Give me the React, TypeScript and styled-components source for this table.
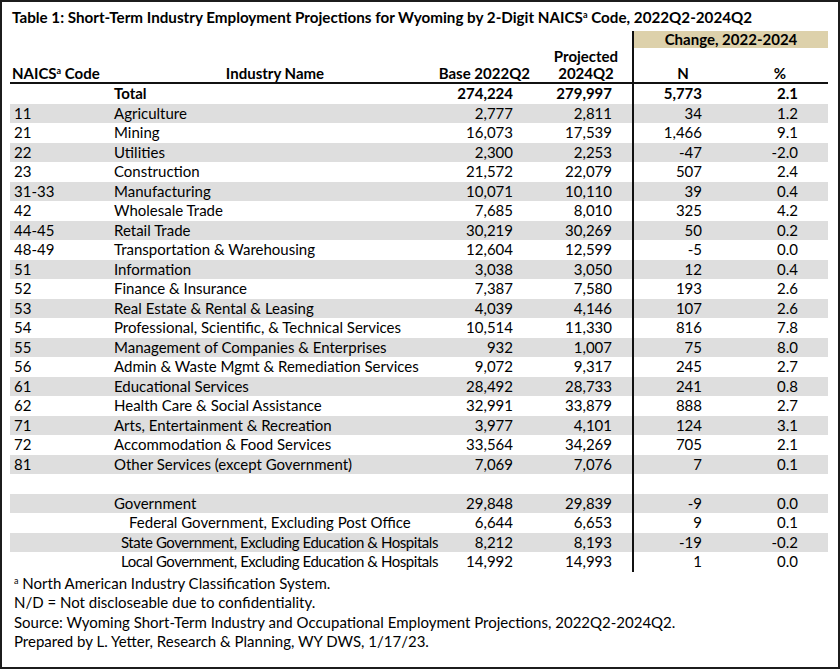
import React from "react";
import styled, { createGlobalStyle } from "styled-components";

const GlobalStyle = createGlobalStyle`
  html, body { margin: 0; padding: 0; background: #ffffff; }
  body { font-family: Lato, "Open Sans", sans-serif; color: #000; }
`;

const COLS = "100px 330px 90px 102px 108px 88px";
const ROW_H = 19.5;

const Frame = styled.div`
  width: 840px;
  height: 669px;
  box-sizing: border-box;
  border: 2px solid #1c1c1c;
  padding: 6px 0 0 8px;
  font-family: Lato, "Open Sans", sans-serif;
  font-size: 15px;
`;

const Title = styled.div`
  font-weight: 700;
  font-size: 15.2px;
  line-height: 19px;
  padding-left: 2px;
  height: 23px;
  white-space: nowrap;
`;

const Table = styled.div`
  display: flex;
  flex-direction: column;
  width: 818px;
`;

const HeadRow = styled.div<{ $h: number; $rule?: boolean }>`
  display: grid;
  grid-template-columns: ${COLS};
  height: ${(p) => p.$h}px;
  border-bottom: ${(p) => (p.$rule ? "2px solid #111" : "none")};
`;

const HeadCell = styled.div<{ $align?: string; $pl?: number; $pr?: number; $divider?: boolean }>`
  font-weight: 700;
  line-height: 17px;
  white-space: nowrap;
  text-align: ${(p) => p.$align || "left"};
  padding-left: ${(p) => p.$pl ?? 0}px;
  padding-right: ${(p) => p.$pr ?? 0}px;
  border-left: ${(p) => (p.$divider ? "2px solid #111" : "none")};
  display: flex;
  align-items: flex-end;
  justify-content: ${(p) =>
    p.$align === "right" ? "flex-end" : p.$align === "center" ? "center" : "flex-start"};
`;

const Band = styled.div`
  grid-column: 5 / 7;
  border-left: 2px solid #111;
  display: flex;
`;

const BandFill = styled.div`
  flex: 1;
  background: #ddd1ab;
  font-weight: 700;
  text-align: center;
  line-height: 17px;
`;

const Row = styled.div<{ $shade: boolean; $bold?: boolean }>`
  display: grid;
  grid-template-columns: ${COLS};
  height: ${ROW_H}px;
  background: ${(p) => (p.$shade ? "#dedede" : "transparent")};
  font-weight: ${(p) => (p.$bold ? 700 : 400)};
  line-height: ${ROW_H}px;
  white-space: nowrap;
`;

const Code = styled.div`
  padding-left: 4px;
`;

const Name = styled.div<{ $indent: number; $tight?: boolean }>`
  padding-left: ${(p) => 4 + p.$indent}px;
  letter-spacing: ${(p) => (p.$tight ? "-0.45px" : "normal")};
`;

const Num = styled.div<{ $pr: number; $divider?: boolean }>`
  text-align: right;
  padding-right: ${(p) => p.$pr}px;
  border-left: ${(p) => (p.$divider ? "2px solid #111" : "none")};
`;

const Notes = styled.div`
  padding: 2px 0 0 4px;
  line-height: 19.5px;
  font-size: 15px;
`;

const Sup = styled.span`
  font-size: 0.6em;
  vertical-align: 0.55em;
  line-height: 0;
`;

type R = { code: string; name: string; base: string; proj: string; n: string; pct: string; indent?: number; bold?: boolean; tight?: boolean };

const rows: R[] = [
  { code: "", name: "Total", base: "274,224", proj: "279,997", n: "5,773", pct: "2.1", bold: true },
  { code: "11", name: "Agriculture", base: "2,777", proj: "2,811", n: "34", pct: "1.2" },
  { code: "21", name: "Mining", base: "16,073", proj: "17,539", n: "1,466", pct: "9.1" },
  { code: "22", name: "Utilities", base: "2,300", proj: "2,253", n: "-47", pct: "-2.0" },
  { code: "23", name: "Construction", base: "21,572", proj: "22,079", n: "507", pct: "2.4" },
  { code: "31-33", name: "Manufacturing", base: "10,071", proj: "10,110", n: "39", pct: "0.4" },
  { code: "42", name: "Wholesale Trade", base: "7,685", proj: "8,010", n: "325", pct: "4.2" },
  { code: "44-45", name: "Retail Trade", base: "30,219", proj: "30,269", n: "50", pct: "0.2" },
  { code: "48-49", name: "Transportation & Warehousing", base: "12,604", proj: "12,599", n: "-5", pct: "0.0" },
  { code: "51", name: "Information", base: "3,038", proj: "3,050", n: "12", pct: "0.4" },
  { code: "52", name: "Finance & Insurance", base: "7,387", proj: "7,580", n: "193", pct: "2.6" },
  { code: "53", name: "Real Estate & Rental & Leasing", base: "4,039", proj: "4,146", n: "107", pct: "2.6" },
  { code: "54", name: "Professional, Scientific, & Technical Services", base: "10,514", proj: "11,330", n: "816", pct: "7.8" },
  { code: "55", name: "Management of Companies & Enterprises", base: "932", proj: "1,007", n: "75", pct: "8.0" },
  { code: "56", name: "Admin & Waste Mgmt & Remediation Services", base: "9,072", proj: "9,317", n: "245", pct: "2.7" },
  { code: "61", name: "Educational Services", base: "28,492", proj: "28,733", n: "241", pct: "0.8" },
  { code: "62", name: "Health Care & Social Assistance", base: "32,991", proj: "33,879", n: "888", pct: "2.7" },
  { code: "71", name: "Arts, Entertainment & Recreation", base: "3,977", proj: "4,101", n: "124", pct: "3.1" },
  { code: "72", name: "Accommodation & Food Services", base: "33,564", proj: "34,269", n: "705", pct: "2.1" },
  { code: "81", name: "Other Services (except Government)", base: "7,069", proj: "7,076", n: "7", pct: "0.1" },
  { code: "", name: "", base: "", proj: "", n: "", pct: "" },
  { code: "", name: "Government", base: "29,848", proj: "29,839", n: "-9", pct: "0.0" },
  { code: "", name: "Federal Government, Excluding Post Office", base: "6,644", proj: "6,653", n: "9", pct: "0.1", indent: 15 },
  { code: "", name: "State Government, Excluding Education & Hospitals", base: "8,212", proj: "8,193", n: "-19", pct: "-0.2", indent: 7, tight: true },
  { code: "", name: "Local Government, Excluding Education & Hospitals", base: "14,992", proj: "14,993", n: "1", pct: "0.0", indent: 7, tight: true },
];

export default function App() {
  return (
    <>
      <GlobalStyle />
      <Frame>
        <Title>
          Table 1: Short-Term Industry Employment Projections for Wyoming by 2-Digit NAICS<Sup>a</Sup> Code, 2022Q2-2024Q2
        </Title>
        <Table>
          <HeadRow $h={17}>
            <div />
            <div />
            <div />
            <div />
            <Band>
              <BandFill>Change, 2022-2024</BandFill>
            </Band>
          </HeadRow>
          <HeadRow $h={17}>
            <div />
            <div />
            <div />
            <HeadCell $align="center" $pl={10}>Projected</HeadCell>
            <HeadCell $divider />
            <HeadCell />
          </HeadRow>
          <HeadRow $h={17} $rule>
            <HeadCell $pl={2}>
              <span>NAICS<Sup>a</Sup> Code</span>
            </HeadCell>
            <HeadCell $align="center">Industry Name</HeadCell>
            <HeadCell $align="right">Base 2022Q2</HeadCell>
            <HeadCell $align="center" $pl={10}>2024Q2</HeadCell>
            <HeadCell $align="center" $pr={8} $divider>N</HeadCell>
            <HeadCell $align="center" $pr={8}>%</HeadCell>
          </HeadRow>
          {rows.map((r, i) => (
            <Row key={i} $shade={i % 2 === 1} $bold={r.bold}>
              <Code>{r.code}</Code>
              <Name $indent={r.indent ?? 0} $tight={r.tight}>{r.name}</Name>
              <Num $pr={17}>{r.base}</Num>
              <Num $pr={20}>{r.proj}</Num>
              <Num $pr={38} $divider>{r.n}</Num>
              <Num $pr={30}>{r.pct}</Num>
            </Row>
          ))}
        </Table>
        <Notes>
          <div>
            <Sup>a</Sup> North American Industry Classification System.
          </div>
          <div>N/D = Not discloseable due to confidentiality.</div>
          <div>Source: Wyoming Short-Term Industry and Occupational Employment Projections, 2022Q2-2024Q2.</div>
          <div>Prepared by L. Yetter, Research &amp; Planning, WY DWS, 1/17/23.</div>
        </Notes>
      </Frame>
    </>
  );
}
